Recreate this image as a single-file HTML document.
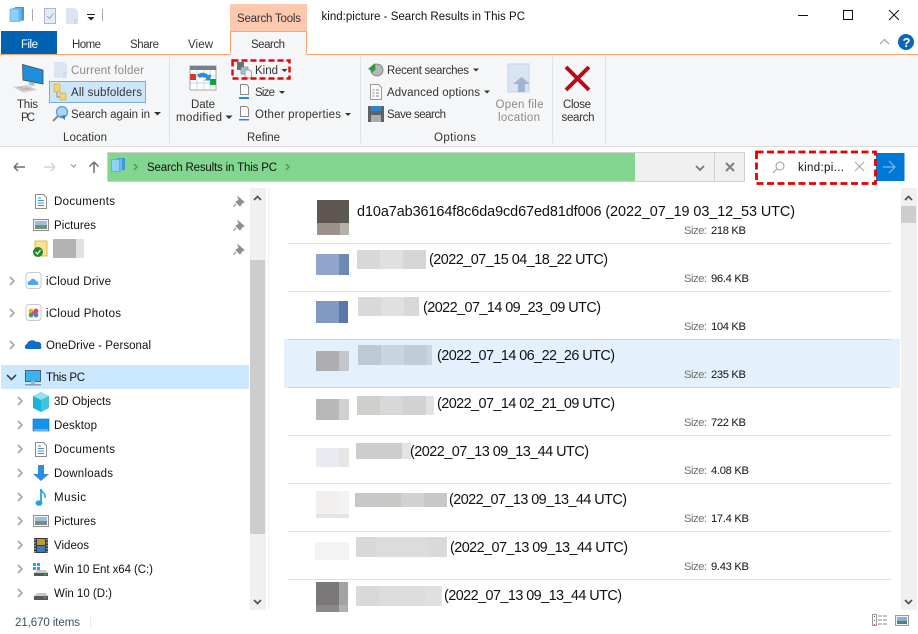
<!DOCTYPE html>
<html><head><meta charset="utf-8"><title>kind:picture - Search Results in This PC</title>
<style>
html,body{margin:0;padding:0;background:#fff;width:918px;height:634px;overflow:hidden}
svg{display:block}
text{font-family:"Liberation Sans",sans-serif;font-size:11.5px;fill:#333}
.n{fill:#111}
.g{fill:#8a8a8a}
.r{font-size:14.4px;fill:#111}
.s{fill:#6d6d6d;font-size:11.2px}
.v{fill:#111;font-size:11.2px}
.c{fill:none;stroke:#a6a6a6;stroke-width:1.6}
.ar{fill:#333}
</style></head><body>
<svg width="918" height="634" viewBox="0 0 918 634" xmlns="http://www.w3.org/2000/svg">
<rect width="918" height="634" fill="#fff"/>

<!-- Title bar -->
<rect x="230" y="4" width="77" height="27" fill="#fcc9ae"/>
<text x="237" y="22" textLength="64">Search Tools</text>
<text x="321.5" y="20" textLength="203.5" class="n">kind:picture - Search Results in This PC</text>
<!-- QAT -->
<rect x="15" y="7" width="9" height="13.500" fill="#3d9ad8"/><rect x="12.5" y="8" width="9" height="13.500" fill="#66b8ee"/><rect x="10" y="9" width="9" height="12.500" fill="#8ed0f8" stroke="#4aa3e0" stroke-width=".6"/>
<rect x="32" y="9" width="1" height="12" fill="#aaa"/>
<rect x="44.500" y="8.500" width="11" height="15" fill="#e3ebf4" stroke="#a9b7c9"/><path d="M47 16l2.500 2.500 4-5" fill="none" stroke="#9aa8ba"/>
<path d="M66 8h9l3 3v13H66z" fill="#dbe5f2"/><path d="M75 24v-4h3" fill="none" stroke="#c4cfdd"/>
<rect x="87" y="14" width="8" height="1" fill="#222"/><path d="M87.500 17h7l-3.500 3.500z" fill="#222"/>
<rect x="102" y="9" width="1" height="12" fill="#aaa"/>
<!-- Window controls -->
<rect x="798" y="15" width="10" height="1" fill="#111"/>
<rect x="843.500" y="10.500" width="9" height="9" fill="none" stroke="#111"/>
<path d="M889 10l10 10M899 10l-10 10" stroke="#111" fill="none"/>
<path d="M880 44l4.500-4.500 4.500 4.500" fill="none" stroke="#a8a8a8" stroke-width="1.300"/>
<circle cx="906" cy="42" r="8" fill="#0b66b8"/>
<text x="902.500" y="47" style="font-size:13px;font-weight:bold;fill:#fff">?</text>

<!-- Ribbon tabs -->
<rect x="1" y="31" width="56" height="23.500" fill="#0063b1"/>
<text x="21" y="48" textLength="17" style="fill:#fff">File</text>
<text x="72" y="48" textLength="29">Home</text>
<text x="130" y="48" textLength="29">Share</text>
<text x="188" y="48" textLength="25">View</text>
<rect x="0" y="54" width="918" height="1" fill="#f9a56f"/>
<path d="M230.500 55V31.500h76V55" fill="#f5f6f7" stroke="#f9a56f"/>
<text x="251" y="48" textLength="34">Search</text>

<!-- Ribbon body -->
<rect x="0" y="55" width="918" height="91" fill="#f5f6f7"/>
<rect x="0" y="146" width="918" height="1" fill="#dadbdc"/>
<rect x="230.500" y="54" width="76" height="2" fill="#f5f6f7"/>
<rect x="169" y="57" width="1" height="86" fill="#e1e2e3"/>
<rect x="360" y="57" width="1" height="86" fill="#e1e2e3"/>
<rect x="552" y="57" width="1" height="86" fill="#e1e2e3"/>
<rect x="605" y="57" width="1" height="86" fill="#e1e2e3"/>

<!-- This PC icon -->
<path d="M22.500 64.500l20.500 5.500v14l-20-4z" fill="#1c8fdc" stroke="#46484c" stroke-width=".8"/>
<path d="M29 82l6 1-1 3-5-1z" fill="#b8bcc0"/>
<path d="M13 87l15-2 9 5-14 2.500z" fill="#cfcfcf"/>
<path d="M17 87.500l13 1M20 89.500l11-.5" stroke="#b2b2b2" stroke-width=".8"/>
<text x="17" y="108" textLength="21">This</text>
<text x="21" y="121" textLength="14">PC</text>

<!-- Location -->
<path d="M54 62h10l3 3v13H54z" fill="#dbe5f2"/><path d="M64 78v-5h3" fill="none" stroke="#c4cfdd"/>
<text x="71" y="74" textLength="73" class="g">Current folder</text>
<rect x="49.500" y="81.500" width="96" height="21" fill="#cde6f7" stroke="#74afdf"/>
<rect x="54" y="84" width="6" height="8" fill="#f5d36d" stroke="#c8a93e" stroke-width=".6"/>
<rect x="60" y="93" width="6" height="7" fill="#f5d36d" stroke="#c8a93e" stroke-width=".6"/>
<path d="M57 92v5h3" fill="none" stroke="#8a8a8a"/>
<text x="71" y="96" textLength="71">All subfolders</text>
<circle cx="62" cy="112" r="5.500" fill="#a7d4f2" stroke="#5d9fd0" stroke-width="1.300"/>
<path d="M58 116l-5 5" stroke="#888" stroke-width="2"/>
<path d="M60 116l5 4 0-5z" fill="#2c87cf"/>
<text x="71" y="118" textLength="79">Search again in</text>
<path d="M154 112h7l-3.500 3.500z" class="ar"/>
<text x="63" y="141" textLength="44">Location</text>

<!-- Refine -->
<rect x="190" y="66" width="26" height="24" fill="#fff" stroke="#8d9297" stroke-width=".8"/>
<rect x="190" y="66" width="26" height="4" fill="#76808a"/>
<path d="M197 70v20M204 70v20M210 70v20M190 76h26M190 83h26" stroke="#b8c8d8" stroke-width=".7"/>
<rect x="190" y="74" width="6" height="6" fill="#d9372e"/>
<rect x="210" y="79" width="6" height="6" fill="#12a33a"/>
<path d="M197 75c3-3 8-3 11 0l3-.5-.5 6h-6l2-2c-2-1.500-5-1.500-7-.5z" fill="#2f8fd4"/>
<text x="191" y="108" textLength="24">Date</text>
<text x="176" y="121" textLength="46">modified</text>
<path d="M225.500 115.500h7l-3.500 3.500z" class="ar"/>
<text x="247" y="141" textLength="33">Refine</text>

<rect x="237" y="62" width="7" height="8" fill="#6a6f74"/>
<rect x="241" y="67" width="7" height="7" fill="#9fc3e2" stroke="#777" stroke-width=".6"/>
<path d="M245 70h5l1.500 1.500V78h-6.500z" fill="#eef1f5" stroke="#8f8f8f" stroke-width=".8"/>
<text x="255" y="74" textLength="23">Kind</text>
<path d="M281.500 69h6l-3 3z" class="ar"/>
<path d="M240.500 84.500h6l2 2v8h-8z" fill="#fbfbfb" stroke="#8a8a8a"/>
<rect x="239" y="97" width="10" height="2" fill="#2b88d8"/>
<text x="255" y="96" textLength="20">Size</text>
<path d="M279 91h6l-3 3z" class="ar"/>
<path d="M240.500 106.500h6l2 2v8h-8z" fill="#fbfbfb" stroke="#8a8a8a"/>
<rect x="239" y="119" width="10" height="1.500" fill="#2b88d8"/>
<text x="255" y="118" textLength="86">Other properties</text>
<path d="M345 113h6l-3 3z" class="ar"/>

<!-- Kind highlight -->
<rect x="232.500" y="60.500" width="57" height="18" fill="none" stroke="#f00000" stroke-width="2.400" stroke-dasharray="6 3"/>

<!-- Options -->
<circle cx="377" cy="70" r="6" fill="#b4b8b8" stroke="#777" stroke-width=".8"/>
<path d="M375 63l-7 6 3 1.500v3l4.500-4z" fill="#2e9e3c"/>
<text x="387" y="74" textLength="82">Recent searches</text>
<path d="M473 68.500h6l-3 3z" class="ar"/>
<path d="M370.500 84.500h8l3 3v12h-11z" fill="#fafafa" stroke="#9a9a9a"/>
<path d="M372.500 90h2M376 90h3M372.500 93h2M376 93h3M372.500 96h2M376 96h3" stroke="#888"/>
<text x="387" y="96" textLength="93">Advanced options</text>
<path d="M484 90.500h6l-3 3z" class="ar"/>
<rect x="368" y="106" width="16" height="16" fill="#5e6367"/>
<rect x="371" y="106" width="10" height="5" fill="#2e86d0"/>
<rect x="371" y="115" width="10" height="7" fill="#a9adb0"/>
<text x="387" y="118" textLength="59">Save search</text>
<text x="434" y="141" textLength="42">Options</text>

<rect x="508" y="64" width="21" height="28" fill="#d8e4f3" stroke="#c5d3e5"/>
<path d="M518 92V84h-5l8.500-7 8.500 7h-5v8z" fill="#9fb5d0"/>
<text x="495.500" y="108" textLength="48" class="g">Open file</text>
<text x="498" y="121" textLength="42" class="g">location</text>

<path d="M566 67l23 23M589 67l-23 23" stroke="#b50d1c" stroke-width="4"/>
<text x="563" y="108" textLength="28">Close</text>
<text x="561.500" y="121" textLength="33">search</text>

<!-- Navigation row -->
<path d="M14 167h11M14 167l4-4M14 167l4 4" fill="none" stroke="#6f6f6f" stroke-width="1.500"/>
<path d="M55 167H44M55 167l-4-4M55 167l-4 4" fill="none" stroke="#d4d4d4" stroke-width="1.500"/>
<path d="M71 164.500l2.500 2.500 2.500-2.500" fill="none" stroke="#9a9a9a" stroke-width="1.200"/>
<path d="M94 173V162M94 162l-4.500 4.500M94 162l4.500 4.500" fill="none" stroke="#6f6f6f" stroke-width="1.500"/>

<rect x="107.500" y="152.500" width="637" height="29" fill="#f0f0f0" stroke="#d0d0d0"/>
<rect x="108" y="153" width="527" height="28" fill="#83d68f"/>
<rect x="117" y="158" width="8" height="12" fill="#3d9ad8"/><rect x="114" y="159" width="8" height="12" fill="#66b8ee"/><rect x="111.500" y="159.500" width="8" height="12" fill="#8ed0f8" stroke="#4aa3e0" stroke-width=".6"/>
<path d="M134 164l3 3-3 3" fill="none" stroke="#5f8f68" stroke-width="1.500"/>
<text x="147" y="171" textLength="130" class="n">Search Results in This PC</text>
<path d="M286 164l3 3-3 3" fill="none" stroke="#5f8f68" stroke-width="1.500"/>
<path d="M696 166l4 4 4-4" fill="none" stroke="#777" stroke-width="1.800"/>
<rect x="714" y="153" width="1" height="28" fill="#d0d0d0"/>
<path d="M726 163l8 8M734 163l-8 8" stroke="#808080" stroke-width="2"/>

<!-- Search box -->
<rect x="756" y="152" width="120" height="31" fill="#fff"/>
<rect x="876" y="153" width="28.500" height="28" fill="#0078d7"/>
<path d="M883 167h12M889 161l6 6-6 6" fill="none" stroke="#7fb8e8" stroke-width="1.200"/>
<circle cx="780" cy="166" r="4" fill="none" stroke="#9a9a9a"/><path d="M777 169l-4 4" stroke="#b9a0a0" stroke-width="1.200"/>
<text x="798" y="171" textLength="46" class="n">kind:pi...</text>
<path d="M855 162l9 9M864 162l-9 9" stroke="#a8a8b0"/>
<rect x="756.500" y="152" width="119" height="31.500" fill="none" stroke="#e80000" stroke-width="2.800" stroke-dasharray="7 3.500"/>

<!-- Nav pane -->
<rect x="268" y="188" width="1" height="422" fill="#f0f0f0"/>
<rect x="250" y="188" width="16" height="422" fill="#f0f0f0"/>
<rect x="250" y="260" width="15" height="274" fill="#cdcdcd"/>
<path d="M254 200l3.500-3.500L261 200" fill="none" stroke="#555" stroke-width="1.800"/>
<path d="M254 600l3.500 3.500L261 600" fill="none" stroke="#555" stroke-width="1.800"/>

<rect x="1" y="365" width="248" height="24" fill="#cce8ff"/>

<g id="pins" fill="#8f8f8f">
<path d="M238 197l6 5-2 1-2 3-4-4 3-2zM236 204l-2.500 3" stroke="#8f8f8f"/>
<path d="M238 221l6 5-2 1-2 3-4-4 3-2zM236 228l-2.500 3" stroke="#8f8f8f"/>
<path d="M238 245l6 5-2 1-2 3-4-4 3-2zM236 252l-2.500 3" stroke="#8f8f8f"/>
</g>

<!-- doc icon -->
<path d="M35.500 194.500h8l3 3v11h-11z" fill="#fff" stroke="#8d8d8d"/><path d="M38 198h3M38 200.500h6M38 203h6M38 205.500h6" stroke="#3a8fd0"/>
<text x="54" y="205" textLength="61" class="n">Documents</text>
<rect x="33.500" y="219.500" width="15" height="11" fill="#f4f6f8" stroke="#8d8d8d"/><rect x="35" y="221" width="12" height="4" fill="#9cc0de"/><rect x="35" y="225" width="12" height="4" fill="#71907f"/>
<text x="54" y="229" textLength="42" class="n">Pictures</text>
<rect x="35" y="241" width="12" height="15" fill="#fbe28f" stroke="#d8b957"/>
<circle cx="38" cy="252" r="5" fill="#1f8a27"/><path d="M35.500 252l2 2 3-4" stroke="#fff" fill="none" stroke-width="1.200"/>
<rect x="53" y="239" width="23" height="19" fill="#b4b3b3"/><rect x="76" y="239" width="8" height="19" fill="#dfe1e3"/>

<!-- tree rows L0 -->
<path d="M10 277l4 4-4 4" class="c"/>
<rect x="26" y="272.500" width="15" height="16" rx="3" fill="#fff" stroke="#c8c8c8"/>
<path d="M29 285c-2 0-2-4 1-4 1-3 5-3 6 0 3 0 3 4 1 4z" fill="#4aa8ef"/>
<text x="46" y="285" textLength="65" class="n">iCloud Drive</text>
<path d="M10 309l4 4-4 4" class="c"/>
<rect x="26" y="304.500" width="15" height="16" rx="3" fill="#fff" stroke="#c8c8c8"/>
<circle cx="31" cy="311" r="2.400" fill="#f4b400"/><circle cx="36" cy="311" r="2.400" fill="#e8483b"/><circle cx="31" cy="315" r="2.400" fill="#37a94c"/><circle cx="36" cy="315" r="2.400" fill="#4a7fe0"/><circle cx="33.500" cy="313" r="1.800" fill="#b04fbf"/>
<text x="46" y="317" textLength="75" class="n">iCloud Photos</text>
<path d="M10 341l4 4-4 4" class="c"/>
<path d="M27 349c-3 0-3-4 0-5 1-4 7-5 9-2 4-1 6 2 5 4 1 2 0 3-1 3z" fill="#0f6cc9"/>
<text x="46" y="349" textLength="105" class="n">OneDrive - Personal</text>
<path d="M7 375l4.500 4.500L16 375" fill="none" stroke="#444" stroke-width="1.600"/>
<rect x="25.500" y="370.500" width="15" height="11" fill="#3ab2ee" stroke="#4d6272"/><rect x="25" y="384" width="16" height="1.500" fill="#8b9aa7"/><rect x="31" y="381" width="4" height="3" fill="#9fb4c2"/>
<text x="46" y="381" textLength="39" class="n">This PC</text>

<!-- tree rows L1 -->
<path d="M18 397l4 4-4 4" class="c"/>
<path d="M33 396l8-4 8 4v12l-8 4-8-4z" fill="#19b4d6"/><path d="M33 396l8 4 8-4-8-4z" fill="#8fe2f0"/><path d="M41 400v12l8-4v-12z" fill="#3fc3de"/>
<text x="54" y="405" textLength="57" class="n">3D Objects</text>
<path d="M18 421l4 4-4 4" class="c"/>
<rect x="33" y="419" width="16" height="12" fill="#1293ee" stroke="#0f6fb8" stroke-width=".6"/><rect x="34" y="429.500" width="14" height="1" fill="#b9e1fb"/>
<text x="54" y="429" textLength="43" class="n">Desktop</text>
<path d="M18 445l4 4-4 4" class="c"/>
<path d="M35.500 442.500h8l3 3v11h-11z" fill="#fff" stroke="#8d8d8d"/><path d="M38 446h3M38 448.500h6M38 451h6M38 453.500h6" stroke="#3a8fd0"/>
<text x="54" y="453" textLength="61" class="n">Documents</text>
<path d="M18 469l4 4-4 4" class="c"/>
<path d="M38 465h6v9h5l-8 7-8-7h5z" fill="#2f8bdc"/>
<text x="54" y="477" textLength="59" class="n">Downloads</text>
<path d="M18 493l4 4-4 4" class="c"/>
<path d="M41 489v13" stroke="#23a0ee" stroke-width="1.800"/><ellipse cx="39" cy="503" rx="3.500" ry="2.800" fill="#23a0ee"/><path d="M41 489c1 4 5 4 4 9" fill="none" stroke="#23a0ee" stroke-width="1.500"/>
<text x="54" y="501" textLength="32" class="n">Music</text>
<path d="M18 517l4 4-4 4" class="c"/>
<rect x="33.500" y="515.500" width="15" height="11" fill="#f4f6f8" stroke="#8d8d8d"/><rect x="35" y="517" width="12" height="4" fill="#9cc0de"/><rect x="35" y="521" width="12" height="4" fill="#71907f"/>
<text x="54" y="525" textLength="42" class="n">Pictures</text>
<path d="M18 541l4 4-4 4" class="c"/>
<rect x="34" y="538" width="14" height="15" fill="#3a3a3a"/><rect x="37" y="539" width="8" height="6" fill="#c09a2c"/><rect x="37" y="546" width="8" height="6" fill="#3a78c8"/>
<path d="M35 539v14M47 539v14" stroke="#ddd" stroke-width="1" stroke-dasharray="1.500 1.500"/>
<text x="54" y="549" textLength="35" class="n">Videos</text>
<path d="M18 565l4 4-4 4" class="c"/>
<rect x="33" y="563" width="3" height="3" fill="#1ea7ee"/><rect x="37" y="563" width="3" height="3" fill="#1ea7ee"/><rect x="33" y="567" width="3" height="3" fill="#1ea7ee"/><rect x="37" y="567" width="3" height="3" fill="#1ea7ee"/>
<path d="M37 570h9l2 3H34z" fill="#c8c8c8"/><rect x="34" y="573" width="14" height="3" fill="#55595c"/><rect x="44" y="574" width="2" height="1" fill="#35d04a"/>
<text x="54" y="573" textLength="99" class="n">Win 10 Ent x64 (C:)</text>
<path d="M18 589l4 4-4 4" class="c"/>
<path d="M37 593h9l2 3H34z" fill="#c8c8c8"/><rect x="34" y="596" width="14" height="4" fill="#55595c"/><rect x="44" y="597" width="2" height="1" fill="#35d04a"/>
<text x="54" y="597" textLength="58" class="n">Win 10 (D:)</text>

<!-- Status bar -->
<text x="15" y="626" textLength="65" style="fill:#3d4f66">21,670 items</text>
<rect x="90" y="616" width="1" height="12" fill="#eee"/>

<!-- Selected row -->
<rect x="284" y="339" width="616" height="49" fill="#e4f1fc"/>

<!-- Separators -->
<g fill="#dfdfdf">
<rect x="288" y="243" width="603" height="1"/>
<rect x="288" y="291" width="603" height="1"/>
<rect x="288" y="339" width="603" height="1" fill="#ccd6df"/>
<rect x="288" y="387" width="603" height="1" fill="#ccd6df"/>
<rect x="288" y="435" width="603" height="1"/>
<rect x="288" y="483" width="603" height="1"/>
<rect x="288" y="531" width="603" height="1"/>
<rect x="288" y="579" width="603" height="1"/>
</g>

<!-- Thumbnails -->
<rect x="317" y="200" width="23" height="23" fill="#5f5652"/><rect x="340" y="200" width="9" height="23" fill="#5c5954"/><rect x="317" y="223" width="23" height="12" fill="#9c918b"/><rect x="340" y="223" width="9" height="12" fill="#b5b0a9"/>
<rect x="316" y="254" width="23" height="21" fill="#8fa5c9"/><rect x="339" y="254" width="10" height="21" fill="#6d8ab5"/>
<rect x="316" y="301" width="23" height="22" fill="#7f99c3"/><rect x="339" y="301" width="9" height="22" fill="#5a78ab"/>
<rect x="316" y="351" width="23" height="20" fill="#aeaeb2"/><rect x="339" y="351" width="10" height="20" fill="#c5c6cd"/>
<rect x="316" y="399" width="23" height="21" fill="#b8b8b8"/><rect x="339" y="399" width="10" height="21" fill="#d0d0d2"/>
<rect x="316" y="448" width="23" height="19" fill="#e8ecf0"/><rect x="339" y="448" width="10" height="19" fill="#e6e6e6"/>
<rect x="316" y="491" width="23" height="23" fill="#f1f0ef"/><rect x="339" y="491" width="10" height="23" fill="#f3f3f3"/><rect x="316" y="514" width="33" height="4" fill="#e4e4e4"/>
<rect x="315" y="542" width="34" height="18" fill="#f3f3f3"/>
<rect x="316" y="582" width="23" height="23" fill="#7a7878"/><rect x="339" y="582" width="9" height="23" fill="#a3a4a2"/><rect x="316" y="605" width="23" height="7" fill="#8a8888"/><rect x="339" y="605" width="9" height="7" fill="#b0b0b0"/>

<!-- Blurred names -->
<rect x="357" y="250" width="23" height="19" fill="#d8d8d8"/><rect x="380" y="250" width="23" height="19" fill="#e0e0e0"/><rect x="403" y="250" width="23" height="19" fill="#d6d6d6"/>
<rect x="358" y="297" width="23" height="19" fill="#d9d9d9"/><rect x="381" y="297" width="23" height="19" fill="#e0e0e0"/><rect x="404" y="297" width="15" height="19" fill="#d8d8d8"/>
<rect x="358" y="345" width="23" height="20" fill="#bccad4"/><rect x="381" y="345" width="23" height="20" fill="#c9d6df"/><rect x="404" y="345" width="23" height="20" fill="#c0cdd8"/><rect x="427" y="345" width="5" height="20" fill="#c9d6e0"/>
<rect x="357" y="396" width="23" height="19" fill="#d0cfcb"/><rect x="380" y="396" width="23" height="19" fill="#d8d8d8"/><rect x="403" y="396" width="23" height="19" fill="#d2d2d2"/><rect x="426" y="396" width="8" height="19" fill="#e2e2e2"/>
<rect x="356" y="443" width="46" height="16" fill="#cecdcb"/><rect x="402" y="443" width="9" height="16" fill="#e4e4e4"/>
<rect x="355" y="493" width="23" height="14" fill="#c8c8c8"/><rect x="378" y="493" width="23" height="14" fill="#c8c7c4"/><rect x="401" y="493" width="23" height="14" fill="#d0d1d3"/><rect x="424" y="493" width="23" height="14" fill="#c8c6c6"/>
<rect x="356" y="537" width="20" height="20" fill="#d8d8d8"/><rect x="376" y="537" width="52" height="20" fill="#dcdcdc"/><rect x="428" y="537" width="19" height="20" fill="#d9d9d9"/>
<rect x="356" y="586" width="23" height="20" fill="#d9d9d9"/><rect x="379" y="586" width="23" height="20" fill="#dddddd"/><rect x="402" y="586" width="23" height="20" fill="#dcdcdc"/><rect x="425" y="586" width="17" height="20" fill="#e0e0e0"/>

<!-- Names -->
<text x="357" y="216" textLength="438" class="r">d10a7ab36164f8c6da9cd67ed81df006 (2022_07_19 03_12_53 UTC)</text>
<text x="429" y="264" textLength="179" class="r">(2022_07_15 04_18_22 UTC)</text>
<text x="423" y="312" textLength="178" class="r">(2022_07_14 09_23_09 UTC)</text>
<text x="437" y="360" textLength="178" class="r">(2022_07_14 06_22_26 UTC)</text>
<text x="437" y="408" textLength="178" class="r">(2022_07_14 02_21_09 UTC)</text>
<text x="410" y="456" textLength="179" class="r">(2022_07_13 09_13_44 UTC)</text>
<text x="449" y="504" textLength="178" class="r">(2022_07_13 09_13_44 UTC)</text>
<text x="450" y="552" textLength="178" class="r">(2022_07_13 09_13_44 UTC)</text>
<text x="444" y="600" textLength="178" class="r">(2022_07_13 09_13_44 UTC)</text>

<!-- Sizes -->
<text x="684" y="234" textLength="23" class="s">Size:</text><text x="711" y="234" textLength="35" class="v">218 KB</text>
<text x="684" y="282" textLength="23" class="s">Size:</text><text x="711" y="282" textLength="38" class="v">96.4 KB</text>
<text x="684" y="330" textLength="23" class="s">Size:</text><text x="711" y="330" textLength="35" class="v">104 KB</text>
<text x="684" y="378" textLength="23" class="s">Size:</text><text x="711" y="378" textLength="35" class="v">235 KB</text>
<text x="684" y="426" textLength="23" class="s">Size:</text><text x="711" y="426" textLength="35" class="v">722 KB</text>
<text x="684" y="474" textLength="23" class="s">Size:</text><text x="711" y="474" textLength="38" class="v">4.08 KB</text>
<text x="684" y="522" textLength="23" class="s">Size:</text><text x="711" y="522" textLength="38" class="v">17.4 KB</text>
<text x="684" y="570" textLength="23" class="s">Size:</text><text x="711" y="570" textLength="38" class="v">9.43 KB</text>
<svg x="600" y="600" width="200" height="10" viewBox="600 600 200 10"><text x="684" y="618" textLength="23" class="s">Size:</text><text x="711" y="618" textLength="38" class="v">5.34 KB</text></svg>

<!-- Right scrollbar -->
<rect x="901" y="188" width="16" height="422" fill="#f0f0f0"/>
<rect x="901" y="206" width="15" height="17" fill="#cdcdcd"/>
<path d="M905 200l3.500-3.500L912 200" fill="none" stroke="#555" stroke-width="1.800"/>
<path d="M905 600l3.500 3.500L912 600" fill="none" stroke="#555" stroke-width="1.800"/>

<!-- View icons -->
<rect x="872.500" y="614.500" width="4" height="11" fill="#fff" stroke="#9a9a9a"/>
<rect x="874" y="616" width="1" height="1" fill="#555"/><rect x="874" y="620" width="1" height="1" fill="#3a78c8"/><rect x="874" y="624" width="1" height="1" fill="#d02020"/>
<path d="M878 616h10M878 620h10M878 624h10" stroke="#8a8a8a" stroke-dasharray="4 1"/>
<rect x="895.500" y="615.500" width="13" height="10" fill="#f0f2f4" stroke="#9a9a9a"/>
<rect x="897" y="617" width="10" height="4" fill="#7fb2dc"/><rect x="897" y="621" width="10" height="3" fill="#5c7e6c"/>
</svg>
</body></html>
